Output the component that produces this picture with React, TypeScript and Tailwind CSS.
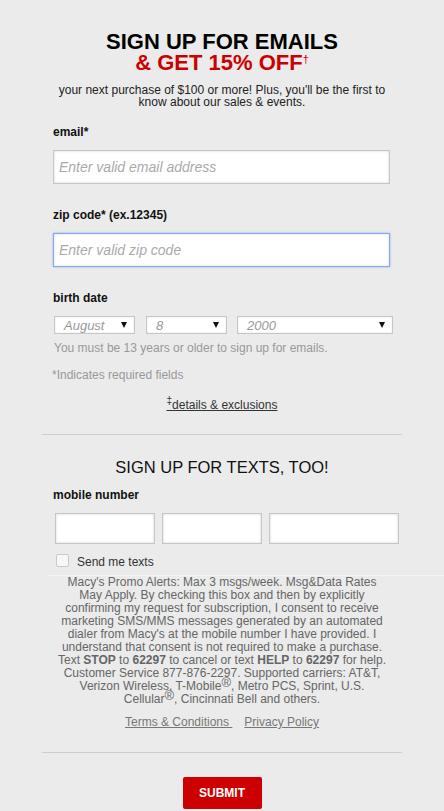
import { useState } from 'react';

const inputBox =
  'block bg-white border border-[#c6c6c6] shadow-[inset_0_0_3px_rgba(0,0,0,0.16)] outline-none';

const SelectBox = ({ value, width }: { value: string; width: string }) => (
  <div className={`${width} h-[18px] flex items-center justify-between bg-white border border-[#c6c6c6] shadow-[inset_0_0_2px_rgba(0,0,0,0.12)] pl-[9px] pr-[7px]`}>
    <span className="text-[13px] italic text-[#999] leading-none">{value}</span>
    <svg width="6" height="6" viewBox="0 0 6 6">
      <polygon points="0,0 6,0 3,6" fill="#111" />
    </svg>
  </div>
);

const App = () => {
  const [email, setEmail] = useState('');
  const [zip, setZip] = useState('');
  const [sendTexts, setSendTexts] = useState(false);

  return (
    <div className="w-[444px] min-h-[811px] bg-[#ebebeb] font-['Liberation_Sans',Arial,sans-serif] overflow-hidden flex flex-col">
      {/* email header */}
      <div className="pt-[31px] text-center">
        <h1 className="text-[22px] leading-[21px] font-bold text-black">
          SIGN UP FOR EMAILS
          <br />
          <span className="text-[#cc0000]">
            &amp; GET 15% OFF<sup className="text-[11px] font-normal top-[-7px]">†</sup>
          </span>
        </h1>
        <p className="mt-[11px] text-[12px] leading-[12px] text-[#222]">
          your next purchase of $100 or more! Plus, you'll be the first to
          <br />
          know about our sales &amp; events.
        </p>
      </div>

      <div className="pl-[53px] flex flex-col">
        <label className="mt-[17px] text-[12px] leading-[14px] font-bold text-[#111]">email*</label>
        <input
          value={email}
          onChange={e => setEmail(e.target.value)}
          placeholder="Enter valid email address"
          className={`${inputBox} mt-[11px] w-[337px] h-[34px] px-[5px] text-[14px] placeholder:italic placeholder:text-[#aaa]`}
        />

        <label className="mt-[24px] text-[12px] leading-[14px] font-bold text-[#111]">zip code* (ex.12345)</label>
        <input
          value={zip}
          onChange={e => setZip(e.target.value)}
          placeholder="Enter valid zip code"
          className="block mt-[11px] w-[337px] h-[34px] px-[5px] text-[14px] bg-white border border-[#86a9ea] shadow-[inset_0_0_3px_rgba(0,0,0,0.14),0_0_2px_rgba(110,150,230,0.7)] outline-none placeholder:italic placeholder:text-[#aaa]"
        />

        <label className="mt-[24px] text-[12px] leading-[14px] font-bold text-[#111]">birth date</label>
        <div className="mt-[11px] ml-px flex">
          <SelectBox value="August" width="w-[81px]" />
          <div className="ml-[11px]">
            <SelectBox value="8" width="w-[81px]" />
          </div>
          <div className="ml-[10px]">
            <SelectBox value="2000" width="w-[156px]" />
          </div>
        </div>
        <p className="mt-[7px] ml-px text-[12px] leading-[14px] text-[#999]">
          You must be 13 years or older to sign up for emails.
        </p>
        <p className="mt-[13px] -ml-px text-[12px] leading-[14px] text-[#999]">*Indicates required fields</p>
      </div>

      <div className="mt-[16px] text-center text-[12px] leading-[14px] text-[#333]">
        <a href="#" className="underline">
          <sup className="text-[10px]">‡</sup>details &amp; exclusions
        </a>
      </div>

      <div className="mt-[22px] mx-[42px] h-px bg-[#cdcdcd]" />

      {/* texts */}
      <h2 className="mt-[22px] text-center text-[16.5px] leading-[20px] text-[#111]">SIGN UP FOR TEXTS, TOO!</h2>

      <div className="pl-[53px] flex flex-col">
        <label className="mt-[11px] text-[12px] leading-[14px] font-bold text-[#111]">mobile number</label>
        <div className="mt-[11px] ml-[2px] flex gap-[7px]">
          <input className={`${inputBox} w-[100px] h-[31px]`} />
          <input className={`${inputBox} w-[100px] h-[31px]`} />
          <input className={`${inputBox} w-[130px] h-[31px]`} />
        </div>
        <label className="mt-[11px] ml-[3px] flex items-start gap-[8px] text-[12px] leading-[14px] text-[#333]">
          <input
            type="checkbox"
            checked={sendTexts}
            onChange={() => setSendTexts(v => !v)}
            className="appearance-none mt-[-1px] w-[13px] h-[13px] rounded-[2px] border border-[#c9c9c9] bg-[#f7f7f7]"
          />
          Send me texts
        </label>
      </div>

      <div className="mt-[6px] ml-[48px] h-px bg-[#f3f3f3]" />

      <p className="text-center text-[12px] leading-[13px] text-[#666]">
        Macy's Promo Alerts: Max 3 msgs/week. Msg&amp;Data Rates
        <br />
        May Apply. By checking this box and then by explicitly
        <br />
        confirming my request for subscription, I consent to receive
        <br />
        marketing SMS/MMS messages generated by an automated
        <br />
        dialer from Macy's at the mobile number I have provided. I
        <br />
        understand that consent is not required to make a purchase.
        <br />
        Text <b>STOP</b> to <b>62297</b> to cancel or text <b>HELP</b> to <b>62297</b> for help.
        <br />
        Customer Service 877-876-2297. Supported carriers: AT&amp;T,
        <br />
        Verizon Wireless, T-Mobile<sup className="text-[13px] top-[-3px]">®</sup>, Metro PCS, Sprint, U.S.
        <br />
        Cellular<sup className="text-[13px] top-[-3px]">®</sup>, Cincinnati Bell and others.
      </p>

      <div className="mt-[9px] flex justify-center gap-[12px] text-[12px] leading-[14px] text-[#777]">
        <a href="#" className="underline whitespace-pre">Terms &amp; Conditions </a>
        <a href="#" className="underline">Privacy Policy</a>
      </div>

      <div className="mt-[23px] mx-[42px] h-px bg-[#cdcdcd]" />

      <div className="mt-[24px] flex justify-center">
        <button
          type="button"
          className="w-[79px] h-[32px] rounded-[2px] bg-[#cc0000] text-white text-[12px] font-bold"
        >
          SUBMIT
        </button>
      </div>
    </div>
  );
};

export default App;
